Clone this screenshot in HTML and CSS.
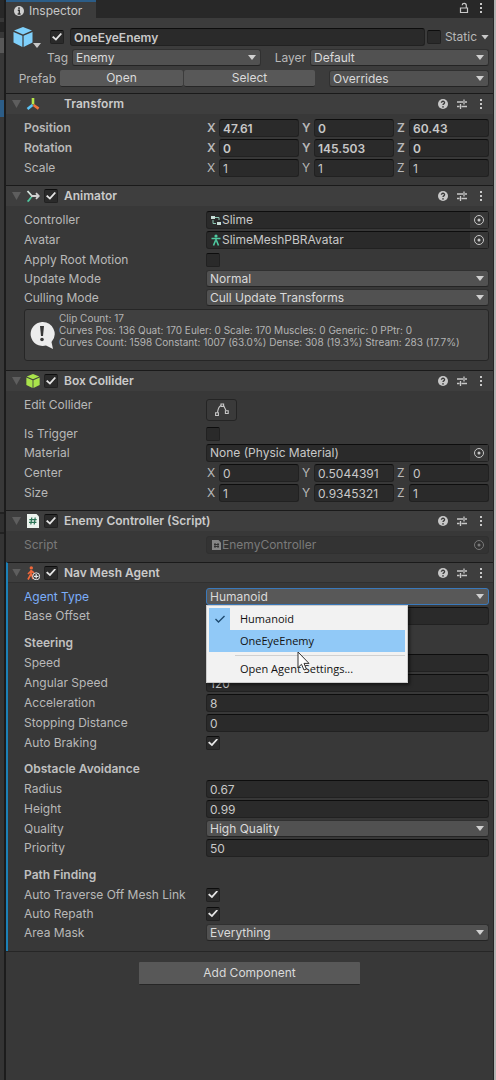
FILE: index.html
```html
<!DOCTYPE html>
<html lang="en">
<head>
<meta charset="utf-8">
<meta name="viewport" content="width=device-width, initial-scale=1">
<title>Inspector</title>
<link rel="stylesheet" href="styles.css">
</head>
<body>
<svg class="defs" aria-hidden="true">
  <symbol id="help" viewBox="0 0 12 12"><circle cx="6" cy="6" r="5" fill="#c8c8c8"/><path d="M4.4 4.8C4.4 2.7 7.7 2.8 7.6 4.8C7.6 5.9 6 5.9 6 7.1" fill="none" stroke="#383838" stroke-width="1.3"/><circle cx="6" cy="8.9" r=".8" fill="#383838"/></symbol>
  <symbol id="preset" viewBox="0 0 12 12"><path d="M1 4H7M9 4H11M8 1.5V6.5M1 8.5H3.5M5.5 8.5H11M4.5 6V11" fill="none" stroke="#c8c8c8" stroke-width="1.3"/></symbol>
  <symbol id="dots" viewBox="0 0 12 12"><path d="M5 1h2v2H5zM5 5h2v2H5zM5 9h2v2H5z" fill="#c8c8c8"/></symbol>
  <symbol id="target" viewBox="0 0 12 12"><circle cx="6" cy="6" r="4.5" fill="none" stroke="currentColor"/><circle cx="6" cy="6" r="1.5" fill="currentColor"/></symbol>
  <symbol id="cube" viewBox="0 0 20 20"><path d="M10 0L19 3.6L10 7.6L1 3.6Z"/><path d="M.5 5L9.4 8.8V20L.5 15.6Z"/><path d="M19.5 5L10.6 8.8V20L19.5 15.6Z"/></symbol>
</svg>
<div class="window">
  <div class="neighbour"></div>
  <main class="inspector">
    <header class="tabbar">
      <button class="tab"><svg class="i12" viewBox="0 0 12 12"><circle cx="6" cy="6" r="5" fill="#d0d0d0"/><path d="M6 2.3V4M4.8 5.3H6.3V9M4.6 9H7.6" fill="none" stroke="#333" stroke-width="1.4"/></svg>Inspector</button>
      <span class="tools">
        <button aria-label="Lock"><svg class="i12" viewBox="0 0 12 12"><path d="M2.5 6H9.5V10.5H2.5ZM8.3 6V3.5C8.3.8 4.3.8 4.2 3.2" fill="none" stroke="#c8c8c8" stroke-width="1.2"/></svg></button>
        <button aria-label="Menu"><svg class="i12"><use href="#dots"/></svg></button>
      </span>
    </header>

    <section class="object">
      <div class="object-row name-row">
        <button class="prefab" aria-label="Icon"><svg class="i20" fill="#7fd0fb"><use href="#cube"/></svg><i class="tri"></i></button>
        <input type="checkbox" checked aria-label="Active">
        <input class="field bold grow" type="text" value="OneEyeEnemy" aria-label="Name">
        <input type="checkbox" id="static"><label for="static">Static</label><button class="tribtn" aria-label="Static options"><i class="tri"></i></button>
      </div>
      <div class="object-row tag-row">
        <label class="tag" for="tag">Tag</label>
        <span class="drop"><select id="tag"><option>Enemy</option></select></span>
        <label class="layer" for="layer">Layer</label>
        <span class="drop"><select id="layer"><option>Default</option></select></span>
      </div>
      <div class="object-row prefab-row">
        <span class="tag">Prefab</span>
        <span class="pair"><button class="btn">Open</button><button class="btn">Select</button></span>
        <span class="drop"><select aria-label="Overrides"><option>Overrides</option></select></span>
      </div>
    </section>

    <section class="component">
      <header class="head"><i class="fold"></i>
        <svg class="i14" viewBox="0 0 14 14"><path d="M7 7.5V1" stroke="#b7e84a" stroke-width="2.6"/><path d="M6.5 8L1.5 12" stroke="#5bc3f5" stroke-width="2.6"/><path d="M7.5 8L12.6 11.6" stroke="#f0743a" stroke-width="2.6"/></svg>
        <span class="nocheck"></span><h2>Transform</h2>
        <span class="tools"><button aria-label="Help"><svg class="i12"><use href="#help"/></svg></button><button aria-label="Presets"><svg class="i12"><use href="#preset"/></svg></button><button aria-label="More"><svg class="i12"><use href="#dots"/></svg></button></span>
      </header>
      <div class="rows">
        <div class="row bold"><span>Position</span><div class="vec"><label>X<input class="field" value="47.61"></label><label>Y<input class="field" value="0"></label><label>Z<input class="field" value="60.43"></label></div></div>
        <div class="row bold"><span>Rotation</span><div class="vec"><label>X<input class="field" value="0"></label><label>Y<input class="field" value="145.503"></label><label>Z<input class="field" value="0"></label></div></div>
        <div class="row"><span>Scale</span><div class="vec"><label>X<input class="field" value="1"></label><label>Y<input class="field" value="1"></label><label>Z<input class="field" value="1"></label></div></div>
      </div>
    </section>

    <section class="component">
      <header class="head"><i class="fold"></i>
        <svg class="i14" viewBox="0 0 14 14" fill="none" stroke-width="1.8"><path d="M1.5 2L6 7" stroke="#d8e6e0"/><path d="M1.5 12.5C4 11 4 8 7 7" stroke="#4fc9a0"/><path d="M5 7H12.5M10 4.2L12.8 7L10 9.8" stroke="#d0d0d0"/></svg>
        <input type="checkbox" checked aria-label="Animator enabled"><h2>Animator</h2>
        <span class="tools"><button aria-label="Help"><svg class="i12"><use href="#help"/></svg></button><button aria-label="Presets"><svg class="i12"><use href="#preset"/></svg></button><button aria-label="More"><svg class="i12"><use href="#dots"/></svg></button></span>
      </header>
      <div class="rows">
        <div class="row"><label for="ctl">Controller</label><div class="field ref"><svg class="i12" viewBox="0 0 12 12"><path d="M1 2H5V5H1ZM7 8H11V11H7Z" fill="#c8dcd6"/><path d="M5 3.5H9V6M3 6V9.5H6" fill="none" stroke="#8fc9b5"/></svg><input id="ctl" value="Slime"><button aria-label="Pick controller"><svg class="i12"><use href="#target"/></svg></button></div></div>
        <div class="row"><label for="ava">Avatar</label><div class="field ref"><svg class="i12" viewBox="0 0 12 12"><circle cx="6" cy="2" r="1.6" fill="#4fc9a0"/><path d="M1.5 4.5H10.5M6 4V7.5M5.5 6.5L3.5 11.5M6.5 6.5L8.5 11.5" fill="none" stroke="#4fc9a0" stroke-width="1.6"/></svg><input id="ava" value="SlimeMeshPBRAvatar"><button aria-label="Pick avatar"><svg class="i12"><use href="#target"/></svg></button></div></div>
        <div class="row short"><label for="arm">Apply Root Motion</label><input type="checkbox" id="arm"></div>
        <div class="row short"><label for="upd">Update Mode</label><span class="drop"><select id="upd"><option>Normal</option></select></span></div>
        <div class="row short"><label for="cul">Culling Mode</label><span class="drop"><select id="cul"><option>Cull Update Transforms</option></select></span></div>
        <div class="info">
          <svg class="bubble" viewBox="0 0 26 28"><path d="M13 1A12 12 0 1 0 17 24.5L24 28L22.5 21A12 12 0 0 0 13 1Z" fill="#ececec"/><path d="M11 5H15L14 15H12Z" fill="#383838"/><circle cx="13" cy="18.5" r="1.8" fill="#383838"/></svg>
          <p>Clip Count: 17<br>Curves Pos: 136 Quat: 170 Euler: 0 Scale: 170 Muscles: 0 Generic: 0 PPtr: 0<br>Curves Count: 1598 Constant: 1007 (63.0%) Dense: 308 (19.3%) Stream: 283 (17.7%)</p>
        </div>
      </div>
    </section>

    <section class="component">
      <header class="head"><i class="fold"></i>
        <svg class="i14" fill="#a9e34b"><use href="#cube"/></svg>
        <input type="checkbox" checked aria-label="Box Collider enabled"><h2>Box Collider</h2>
        <span class="tools"><button aria-label="Help"><svg class="i12"><use href="#help"/></svg></button><button aria-label="Presets"><svg class="i12"><use href="#preset"/></svg></button><button aria-label="More"><svg class="i12"><use href="#dots"/></svg></button></span>
      </header>
      <div class="rows">
        <div class="row tall"><span>Edit Collider</span><button class="edit" aria-label="Edit Collider"><svg class="i14" viewBox="0 0 14 14" fill="none" stroke="#c8c8c8" stroke-width="1.1"><path d="M2.5 9.5C3 6 4 3.5 6 2.5M8.5 2.5L11 7.5"/><path d="M.6 9.7H3.4V12.5H.6ZM10.4 7.7H13.2V10.5H10.4ZM6 1H8.6V3.4H6Z"/></svg></button></div>
        <div class="row short"><label for="trg">Is Trigger</label><input type="checkbox" id="trg"></div>
        <div class="row"><label for="mat">Material</label><div class="field ref"><input id="mat" value="None (Physic Material)"><button aria-label="Pick material"><svg class="i12"><use href="#target"/></svg></button></div></div>
        <div class="row"><span>Center</span><div class="vec"><label>X<input class="field" value="0"></label><label>Y<input class="field" value="0.5044391"></label><label>Z<input class="field" value="0"></label></div></div>
        <div class="row"><span>Size</span><div class="vec"><label>X<input class="field" value="1"></label><label>Y<input class="field" value="0.9345321"></label><label>Z<input class="field" value="1"></label></div></div>
      </div>
    </section>

    <section class="component">
      <header class="head"><i class="fold"></i>
        <svg class="i14" viewBox="0 0 14 14"><path d="M1 0H10.5L13 2.5V14H1Z" fill="#edf3ee"/><path d="M5.8 3.5L4.8 10.5M9.2 3.5L8.2 10.5M3.3 5.7H10.7M3 8.4H10.4" stroke="#2b7355" stroke-width="1.2"/></svg>
        <input type="checkbox" checked aria-label="Enemy Controller enabled"><h2>Enemy Controller (Script)</h2>
        <span class="tools"><button aria-label="Help"><svg class="i12"><use href="#help"/></svg></button><button aria-label="Presets"><svg class="i12"><use href="#preset"/></svg></button><button aria-label="More"><svg class="i12"><use href="#dots"/></svg></button></span>
      </header>
      <div class="rows">
        <div class="row off"><label for="scr">Script</label><div class="field ref"><svg class="i12" viewBox="0 0 12 12"><path d="M2 1H8.5L11 3.5V11H2Z" fill="#858585"/><path d="M5 4V9M8 4V9M4 5.5H9M4 7.5H9" stroke="#333"/></svg><input id="scr" value="EnemyController" disabled><button disabled aria-label="Pick script"><svg class="i12"><use href="#target"/></svg></button></div></div>
      </div>
    </section>

    <section class="component changed">
      <header class="head"><i class="fold"></i>
        <svg class="i14" viewBox="0 0 14 14"><circle cx="5.3" cy="1.9" r="1.7" fill="#f0683a"/><path d="M5 4V8L2 13.5M5.5 8L7 13M5 5L2 8M5.5 5L8 7" fill="none" stroke="#f0683a" stroke-width="1.7"/><circle cx="10.2" cy="10.3" r="3.5" fill="#333" stroke="#e8e8e8"/><path d="M10.2 8V12.6M7.9 10.3H12.5" stroke="#e8e8e8" stroke-width="1.2"/></svg>
        <input type="checkbox" checked aria-label="Nav Mesh Agent enabled"><h2>Nav Mesh Agent</h2>
        <span class="tools"><button aria-label="Help"><svg class="i12"><use href="#help"/></svg></button><button aria-label="Presets"><svg class="i12"><use href="#preset"/></svg></button><button aria-label="More"><svg class="i12"><use href="#dots"/></svg></button></span>
      </header>
      <div class="rows">
        <div class="row short active"><label for="agt">Agent Type</label>
          <div class="anchor"><span class="drop"><select id="agt"><option>Humanoid</option></select></span>
            <div class="menu" role="menu">
              <button class="item" role="menuitem"><span class="mark"><svg class="i12" viewBox="0 0 12 12"><path d="M1.5 6L4.5 9L10.5 3" fill="none" stroke="#1d4a70" stroke-width="1.4"/></svg></span>Humanoid</button>
              <button class="item hover" role="menuitem"><span class="mark"></span>OneEyeEnemy</button>
              <hr>
              <button class="item" role="menuitem"><span class="mark none"></span>Open Agent Settings...</button>
              <svg class="cursor" viewBox="0 0 13 20"><path d="M1 1V16.5L4.5 13.3L7 19L9.4 18L7 12.4H12Z" fill="#fff" stroke="#333"/></svg>
            </div>
          </div>
        </div>
        <div class="row"><label for="bof">Base Offset</label><input class="field" id="bof" value=""></div>
        <h3>Steering</h3>
        <div class="row"><label for="spd">Speed</label><input class="field" id="spd" value=""></div>
        <div class="row"><label for="ang">Angular Speed</label><input class="field" id="ang" value="120"></div>
        <div class="row"><label for="acc">Acceleration</label><input class="field" id="acc" value="8"></div>
        <div class="row"><label for="stp">Stopping Distance</label><input class="field" id="stp" value="0"></div>
        <div class="row short"><label for="brk">Auto Braking</label><input type="checkbox" id="brk" checked></div>
        <h3>Obstacle Avoidance</h3>
        <div class="row"><label for="rad">Radius</label><input class="field" id="rad" value="0.67"></div>
        <div class="row"><label for="hgt">Height</label><input class="field" id="hgt" value="0.99"></div>
        <div class="row short"><label for="qua">Quality</label><span class="drop"><select id="qua"><option>High Quality</option></select></span></div>
        <div class="row"><label for="pri">Priority</label><input class="field" id="pri" value="50"></div>
        <h3>Path Finding</h3>
        <div class="row short"><label for="lnk">Auto Traverse Off Mesh Link</label><input type="checkbox" id="lnk" checked></div>
        <div class="row short"><label for="rep">Auto Repath</label><input type="checkbox" id="rep" checked></div>
        <div class="row short"><label for="msk">Area Mask</label><span class="drop"><select id="msk"><option>Everything</option></select></span></div>
      </div>
    </section>
    <footer class="add"><button class="btn">Add Component</button></footer>
  </main>
</div>
</body>
</html>
```
FILE: styles.css
```css
* { box-sizing: border-box; }
body { margin: 0; background: #383838; color: #b8b8b8; font: 12px/16px Inter, "Liberation Sans", sans-serif; }
button, input, select { margin: 0; padding: 0; border: 0; background: none; color: inherit; font: inherit; }
button { display: flex; align-items: center; justify-content: center; }
svg { display: block; flex: none; }
.defs { position: absolute; width: 0; height: 0; }
.i12 { width: 12px; height: 12px; }
.i14 { width: 14px; height: 14px; }
.i20 { width: 22px; height: 22px; }

.window { display: flex; min-height: 100vh; border-right: 2px solid #b4b4b4; }
.neighbour {
  flex: none; width: 6px; border-right: 2px solid #1c1c1c;
  background: linear-gradient(#282828 18px, #383838 18px 22px, #242424 22px 32px, #383838 32px 38px, #585858 38px 53px, #383838 53px 100px, #2c5d87 100px 117px, #383838 117px 512px, #222 512px 514px, #303030 514px 532px, #222 532px 534px, #343434 534px);
}
.inspector { flex: 1; min-width: 0; border-right: 1px solid #262626; }

.tabbar { display: flex; justify-content: space-between; height: 18px; padding-right: 6px; background: #282828; }
.tab { gap: 4px; padding: 1px 14px 0 7px; border-top: 2px solid #2c5d87; background: #3c3c3c; color: #c8c8c8; }
.tools { display: flex; align-items: center; gap: 7px; margin-left: auto; }
.tabbar .tools { gap: 5px; padding-bottom: 2px; }

.object { display: grid; gap: 4px; height: 75px; padding: 8px 4px 3px 7px; background: #3c3c3c; align-content: start; }
.object-row { display: grid; align-items: center; }
.name-row { grid-template-columns: 33px 14px 1fr 14px auto 8px; column-gap: 4px; height: 19px; }
.name-row .grow { margin-left: 2px; }
.tag-row { grid-template-columns: 55px 189fr 41px 179fr; column-gap: 4px; height: 17px; }
.prefab-row { grid-template-columns: 43px 1fr 160px; column-gap: 4px; height: 17px; }
.tag { justify-self: end; }
.layer { justify-self: end; }
.pair { display: grid; grid-template-columns: 123px 1fr; gap: 1px; margin-right: 10px; }
.prefab { align-items: flex-end; justify-content: flex-start; align-self: start; }
.prefab .i20 { width: 20px; height: 22px; }
.tri { flex: none; width: 8px; height: 5px; background: #c8c8c8; clip-path: polygon(0 0, 100% 0, 50% 100%); }
.btn { height: 17px; border-radius: 2px; border-bottom: 1px solid #262626; background: #585858; color: #dadada; }

.field { min-width: 0; width: 100%; height: 18px; padding: 0 3px; border: 1px solid #212121; border-top-color: #0d0d0d; border-radius: 3px; background: #2a2a2a; color: #c8c8c8; }
.bold, .bold .field { font-weight: 600; }

input[type=checkbox] { appearance: none; display: grid; place-items: center; width: 14px; height: 14px; border: 1px solid #212121; border-top-color: #0d0d0d; border-radius: 2px; background: #2a2a2a; }
input[type=checkbox]:checked::before { content: ""; width: 10px; height: 8px; background: #e4e4e4; clip-path: polygon(0 52%, 14% 36%, 38% 66%, 86% 0, 100% 14%, 40% 98%); }

.drop { display: grid; align-items: center; min-width: 0; height: 17px; border: 1px solid #303030; border-bottom-color: #242424; border-radius: 3px; background: #515151; color: #dadada; }
.drop::after { content: ""; grid-area: 1 / 1; justify-self: end; width: 8px; height: 5px; margin-right: 4px; background: #d0d0d0; clip-path: polygon(0 0, 100% 0, 50% 100%); pointer-events: none; }
.drop select { grid-area: 1 / 1; appearance: none; width: 100%; height: 15px; padding: 0 16px 0 3px; line-height: 15px; }

.component { border-top: 1px solid #1a1a1a; }
.head { display: flex; align-items: center; height: 20px; padding: 0 6px; background: #3e3e3e; }
.fold { width: 9px; height: 8px; margin-right: 5px; background: #5e5e5e; clip-path: polygon(0 0, 100% 0, 50% 100%); }
.head > input, .nocheck { width: 14px; margin: 0 6px 0 4px; }
h2, h3 { margin: 0; font-size: 12px; font-weight: 600; line-height: 20px; color: #cacaca; }
h3 { margin-top: 7px; color: #c0c0c0; }
.rows { padding: 4px 4px 7px 18px; }
.row { display: grid; grid-template-columns: 182px 1fr; align-items: center; height: 20px; }
.short { height: 19px; }
.tall { height: 29px; }
.tall > span { align-self: start; padding-top: 2px; }
.vec { display: grid; grid-template-columns: repeat(3, 1fr); gap: 2px; }
.vec label { display: grid; grid-template-columns: 9px 1fr; gap: 3px; align-items: center; padding-left: 1px; }
.ref { display: flex; align-items: center; padding-right: 0; }
.ref input { flex: 1; min-width: 0; }
.ref button { width: 18px; height: 16px; background: #373737; }
.off { color: #7a7a7a; }
.off .field { border-color: #303030; background: #333; color: #7a7a7a; }
.off .ref button { background: none; }
.edit { width: 31px; height: 22px; border: 1px solid #242424; border-radius: 3px; background: #3a3a3a; }
.info { display: flex; align-items: center; gap: 4px; height: 52px; margin: 2px 0; padding: 0 4px; border: 1px solid #262626; border-radius: 3px; background: #404040; }
.info p { align-self: start; margin: 2px 0 0; font-size: 10px; line-height: 12px; white-space: nowrap; color: #b4b4b4; }
.bubble { width: 26px; height: 28px; }

.changed { border-left: 2px solid #1c81b8; }
.changed .head { padding-left: 4px; border-bottom: 1px solid #303030; }
.changed .rows { padding-left: 16px; padding-bottom: 9px; }
.active label { color: #7baefa; }
.anchor { position: relative; }
.anchor .drop { border-color: #3a79bb; background: #585858; }
.menu { position: absolute; z-index: 1; top: 100%; left: 0; width: 202px; padding: 2px; border: 1px solid #ccc; background: #f2f2f2; box-shadow: 2px 2px 3px rgba(0, 0, 0, .5); color: #111; font: 11px/22px "Open Sans", sans-serif; }
.item { width: 100%; height: 22px; justify-content: flex-start; }
.mark { display: grid; place-items: center; width: 21px; height: 22px; margin-right: 10px; background: #91c9f7; }
.mark.none { background: none; }
.hover { background: #91c9f7; }
.menu hr { height: 1px; margin: 3px 0 2px 26px; border: 0; background: #d0d0d0; }
.cursor { position: absolute; left: 90px; top: 45px; width: 13px; height: 20px; }

.add { display: flex; justify-content: center; padding-top: 10px; border-top: 1px solid #262626; }
.add .btn { width: 221px; height: 23px; border-radius: 1px; }
```
